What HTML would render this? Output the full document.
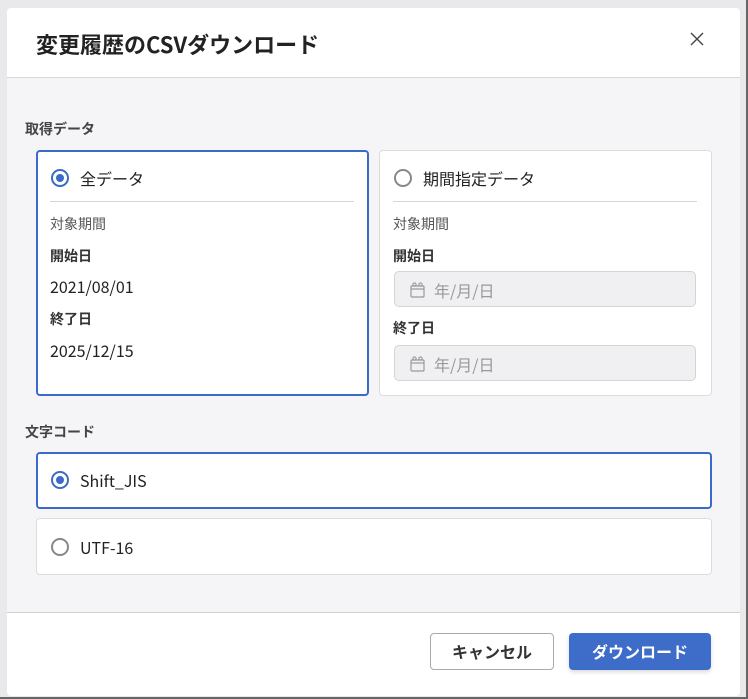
<!DOCTYPE html>
<html><head><meta charset="utf-8"><style>
*{box-sizing:border-box;margin:0;padding:0}
body{width:748px;height:699px;position:relative;background:#e9e9eb;font-family:"Noto Sans CJK JP","Liberation Sans",sans-serif;color:#222;overflow:hidden}
.a{position:absolute;line-height:20px;white-space:nowrap}
.frame{left:0;top:0;width:748px;height:699px;border-right:2px solid #666;border-bottom:2px solid #666}
.dlg{left:7px;top:8px;width:733px;height:688px;background:#f5f5f7;border-radius:4px;overflow:hidden}
.hd{left:0;top:0;width:733px;height:70px;background:#fff;border-bottom:1px solid #d8d8d8}
.ft{left:0;top:604px;width:733px;height:84px;background:#fff;border-top:1px solid #d0d0d0}
.card{background:#fff;border:1px solid #dcdcdc;border-radius:4px}
.sel{border:2px solid #3a6bc9}
.radio{width:18px;height:18px;border-radius:50%;border:2px solid #888}
.radio.on{border-color:#3a6bc9}
.radio.on::after{content:"";position:absolute;left:3px;top:3px;width:8px;height:8px;border-radius:50%;background:#3a6bc9}
.t16{font-size:16px}
.lab{font-size:14px;color:#555}
.b{font-size:14px;font-weight:bold;color:#333}
.inp{width:302px;height:36px;background:#f0f0f2;border:1px solid #d4d4d4;border-radius:5px;color:#999;font-size:16px;padding-left:39px;line-height:36px}
</style></head><body>
<div class="a frame"></div>
<div class="a dlg">
 <div class="a hd"></div>
 <div class="a" style="left:29px;top:21px;font-size:22px;line-height:30px;font-weight:bold;color:#222">変更履歴のCSVダウンロード</div>
 <svg class="a" style="left:682px;top:23px" width="16" height="16" viewBox="0 0 16 16"><path d="M2 2L14 14M14 2L2 14" stroke="#444" stroke-width="1.4"/></svg>

 <div class="a b" style="left:18px;top:111px;color:#444">取得データ</div>

 <div class="a card sel" style="left:29px;top:142px;width:333px;height:246px"></div>
 <div class="a radio on" style="left:44px;top:161px"></div>
 <div class="a t16" style="left:73px;top:160px">全データ</div>
 <div class="a" style="left:43px;top:193px;width:304px;height:1px;background:#d6d6d6"></div>
 <div class="a lab" style="left:43px;top:206px">対象期間</div>
 <div class="a b" style="left:43px;top:238px">開始日</div>
 <div class="a t16" style="left:43px;top:268px">2021/08/01</div>
 <div class="a b" style="left:43px;top:301px">終了日</div>
 <div class="a t16" style="left:43px;top:332px">2025/12/15</div>

 <div class="a card" style="left:372px;top:142px;width:333px;height:246px"></div>
 <div class="a radio" style="left:387px;top:161px"></div>
 <div class="a t16" style="left:416px;top:160px">期間指定データ</div>
 <div class="a" style="left:386px;top:193px;width:304px;height:1px;background:#d6d6d6"></div>
 <div class="a lab" style="left:386px;top:206px">対象期間</div>
 <div class="a b" style="left:386px;top:238px">開始日</div>
 <div class="a inp" style="left:387px;top:263px">年/月/日</div>
 <div class="a b" style="left:386px;top:310px">終了日</div>
 <div class="a inp" style="left:387px;top:337px">年/月/日</div>
 <svg class="a" style="left:403px;top:274px" width="15" height="16" viewBox="0 0 15 16"><rect x="1" y="4" width="13" height="11" rx="1" fill="none" stroke="#999" stroke-width="1.2"/><path d="M1 7H14" stroke="#999" stroke-width="1.2"/><circle cx="4.5" cy="2.5" r="1.6" fill="none" stroke="#999" stroke-width="1.1"/><circle cx="10.5" cy="2.5" r="1.6" fill="none" stroke="#999" stroke-width="1.1"/></svg>
 <svg class="a" style="left:403px;top:348px" width="15" height="16" viewBox="0 0 15 16"><rect x="1" y="4" width="13" height="11" rx="1" fill="none" stroke="#999" stroke-width="1.2"/><path d="M1 7H14" stroke="#999" stroke-width="1.2"/><circle cx="4.5" cy="2.5" r="1.6" fill="none" stroke="#999" stroke-width="1.1"/><circle cx="10.5" cy="2.5" r="1.6" fill="none" stroke="#999" stroke-width="1.1"/></svg>

 <div class="a b" style="left:18px;top:414px;color:#444">文字コード</div>
 <div class="a card sel" style="left:29px;top:444px;width:676px;height:57px"></div>
 <div class="a radio on" style="left:44px;top:463px"></div>
 <div class="a t16" style="left:73px;top:462px">Shift_JIS</div>
 <div class="a card" style="left:29px;top:510px;width:676px;height:57px"></div>
 <div class="a radio" style="left:44px;top:530px"></div>
 <div class="a t16" style="left:73px;top:529px">UTF-16</div>

 <div class="a ft"></div>
 <div class="a" style="left:423px;top:625px;width:124px;height:37px;border:1px solid #aaa;border-radius:4px;background:#fff;text-align:center;line-height:35px;font-size:16px;font-weight:bold;color:#333">キャンセル</div>
 <div class="a" style="left:562px;top:625px;width:142px;height:37px;border-radius:4px;background:#3d6cc9;text-align:center;line-height:37px;font-size:16px;font-weight:bold;color:#fff;box-shadow:0 2px 4px rgba(0,0,0,.15)">ダウンロード</div>
</div>
</body></html>
